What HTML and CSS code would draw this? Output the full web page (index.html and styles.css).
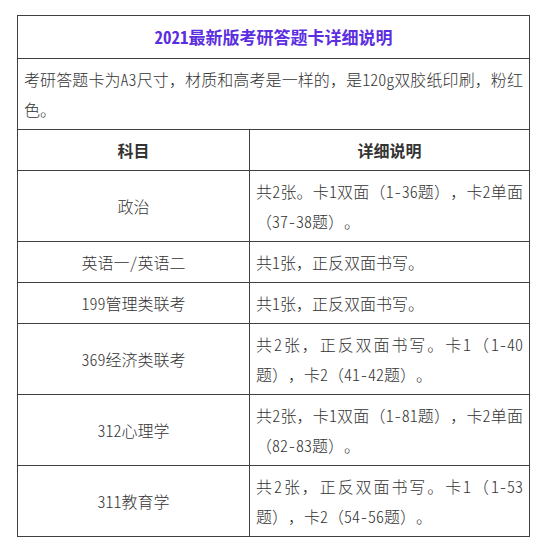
FILE: index.html
```html
<!DOCTYPE html>
<html lang="zh-CN">
<head>
<meta charset="utf-8">
<link rel="stylesheet" href="styles.css">
</head>
<body>
<div class="page">
<table class="info">
  <colgroup><col class="c1"><col class="c2"></colgroup>
  <tr><td colspan="2" class="title"><span class="l">2021</span>最新版考研答题卡详细说明</td></tr>
  <tr><td colspan="2" class="intro">考研答题卡为<span class="l">A3</span>尺寸，材质和高考是一样的，是<span class="l">120g</span>双胶纸印刷，粉红色。</td></tr>
  <tr><th>科目</th><th>详细说明</th></tr>
  <tr><td class="subj">政治</td><td class="desc">共<span class="l">2</span>张。卡<span class="l">1</span>双面（<span class="l">1-36</span>题），卡<span class="l">2</span>单面（<span class="l">37-38</span>题）。</td></tr>
  <tr><td class="subj">英语一<span class="l">/</span>英语二</td><td class="desc">共<span class="l">1</span>张，正反双面书写。</td></tr>
  <tr><td class="subj"><span class="l">199</span>管理类联考</td><td class="desc">共<span class="l">1</span>张，正反双面书写。</td></tr>
  <tr><td class="subj"><span class="l">369</span>经济类联考</td><td class="desc">共<span class="l">2</span>张，正反双面书写。卡<span class="l">1</span>（<span class="l">1-40</span>题），卡<span class="l">2</span>（<span class="l">41-42</span>题）。</td></tr>
  <tr><td class="subj"><span class="l">312</span>心理学</td><td class="desc">共<span class="l">2</span>张，卡<span class="l">1</span>双面（<span class="l">1-81</span>题），卡<span class="l">2</span>单面（<span class="l">82-83</span>题）。</td></tr>
  <tr><td class="subj"><span class="l">311</span>教育学</td><td class="desc">共<span class="l">2</span>张，正反双面书写。卡<span class="l">1</span>（<span class="l">1-53</span>题），卡<span class="l">2</span>（<span class="l">54-56</span>题）。</td></tr>
</table>
</div>
</body>
</html>
```

FILE: styles.css
```css
html, body {
  margin: 0;
  padding: 0;
  background: #ffffff;
}
.page {
  padding: 15px 0 0 17px;
}
.info {
  border-collapse: collapse;
  width: 512px;
  table-layout: fixed;
  font-family: "Noto Sans CJK SC", "DejaVu Sans", sans-serif;
  font-size: 16px;
  font-weight: 300;
  text-spacing-trim: space-all;
  color: #333333;
}
.l {
  font-feature-settings: "hwid";
}
.c1 { width: 232px; }
.c2 { width: 280px; }
.info td, .info th {
  border: 1px solid #404040;
  padding: 5px 6px;
  line-height: 30px;
  vertical-align: middle;
}
.info th {
  font-weight: bold;
  text-align: center;
  color: #333333;
}
.title {
  text-align: center;
  font-weight: bold;
  font-size: 17px;
  line-height: 32px !important;
  color: #5b2ee0;
}
.intro {
  text-align: justify;
}
.subj {
  text-align: center;
}
.desc {
  text-align: justify;
}
```
